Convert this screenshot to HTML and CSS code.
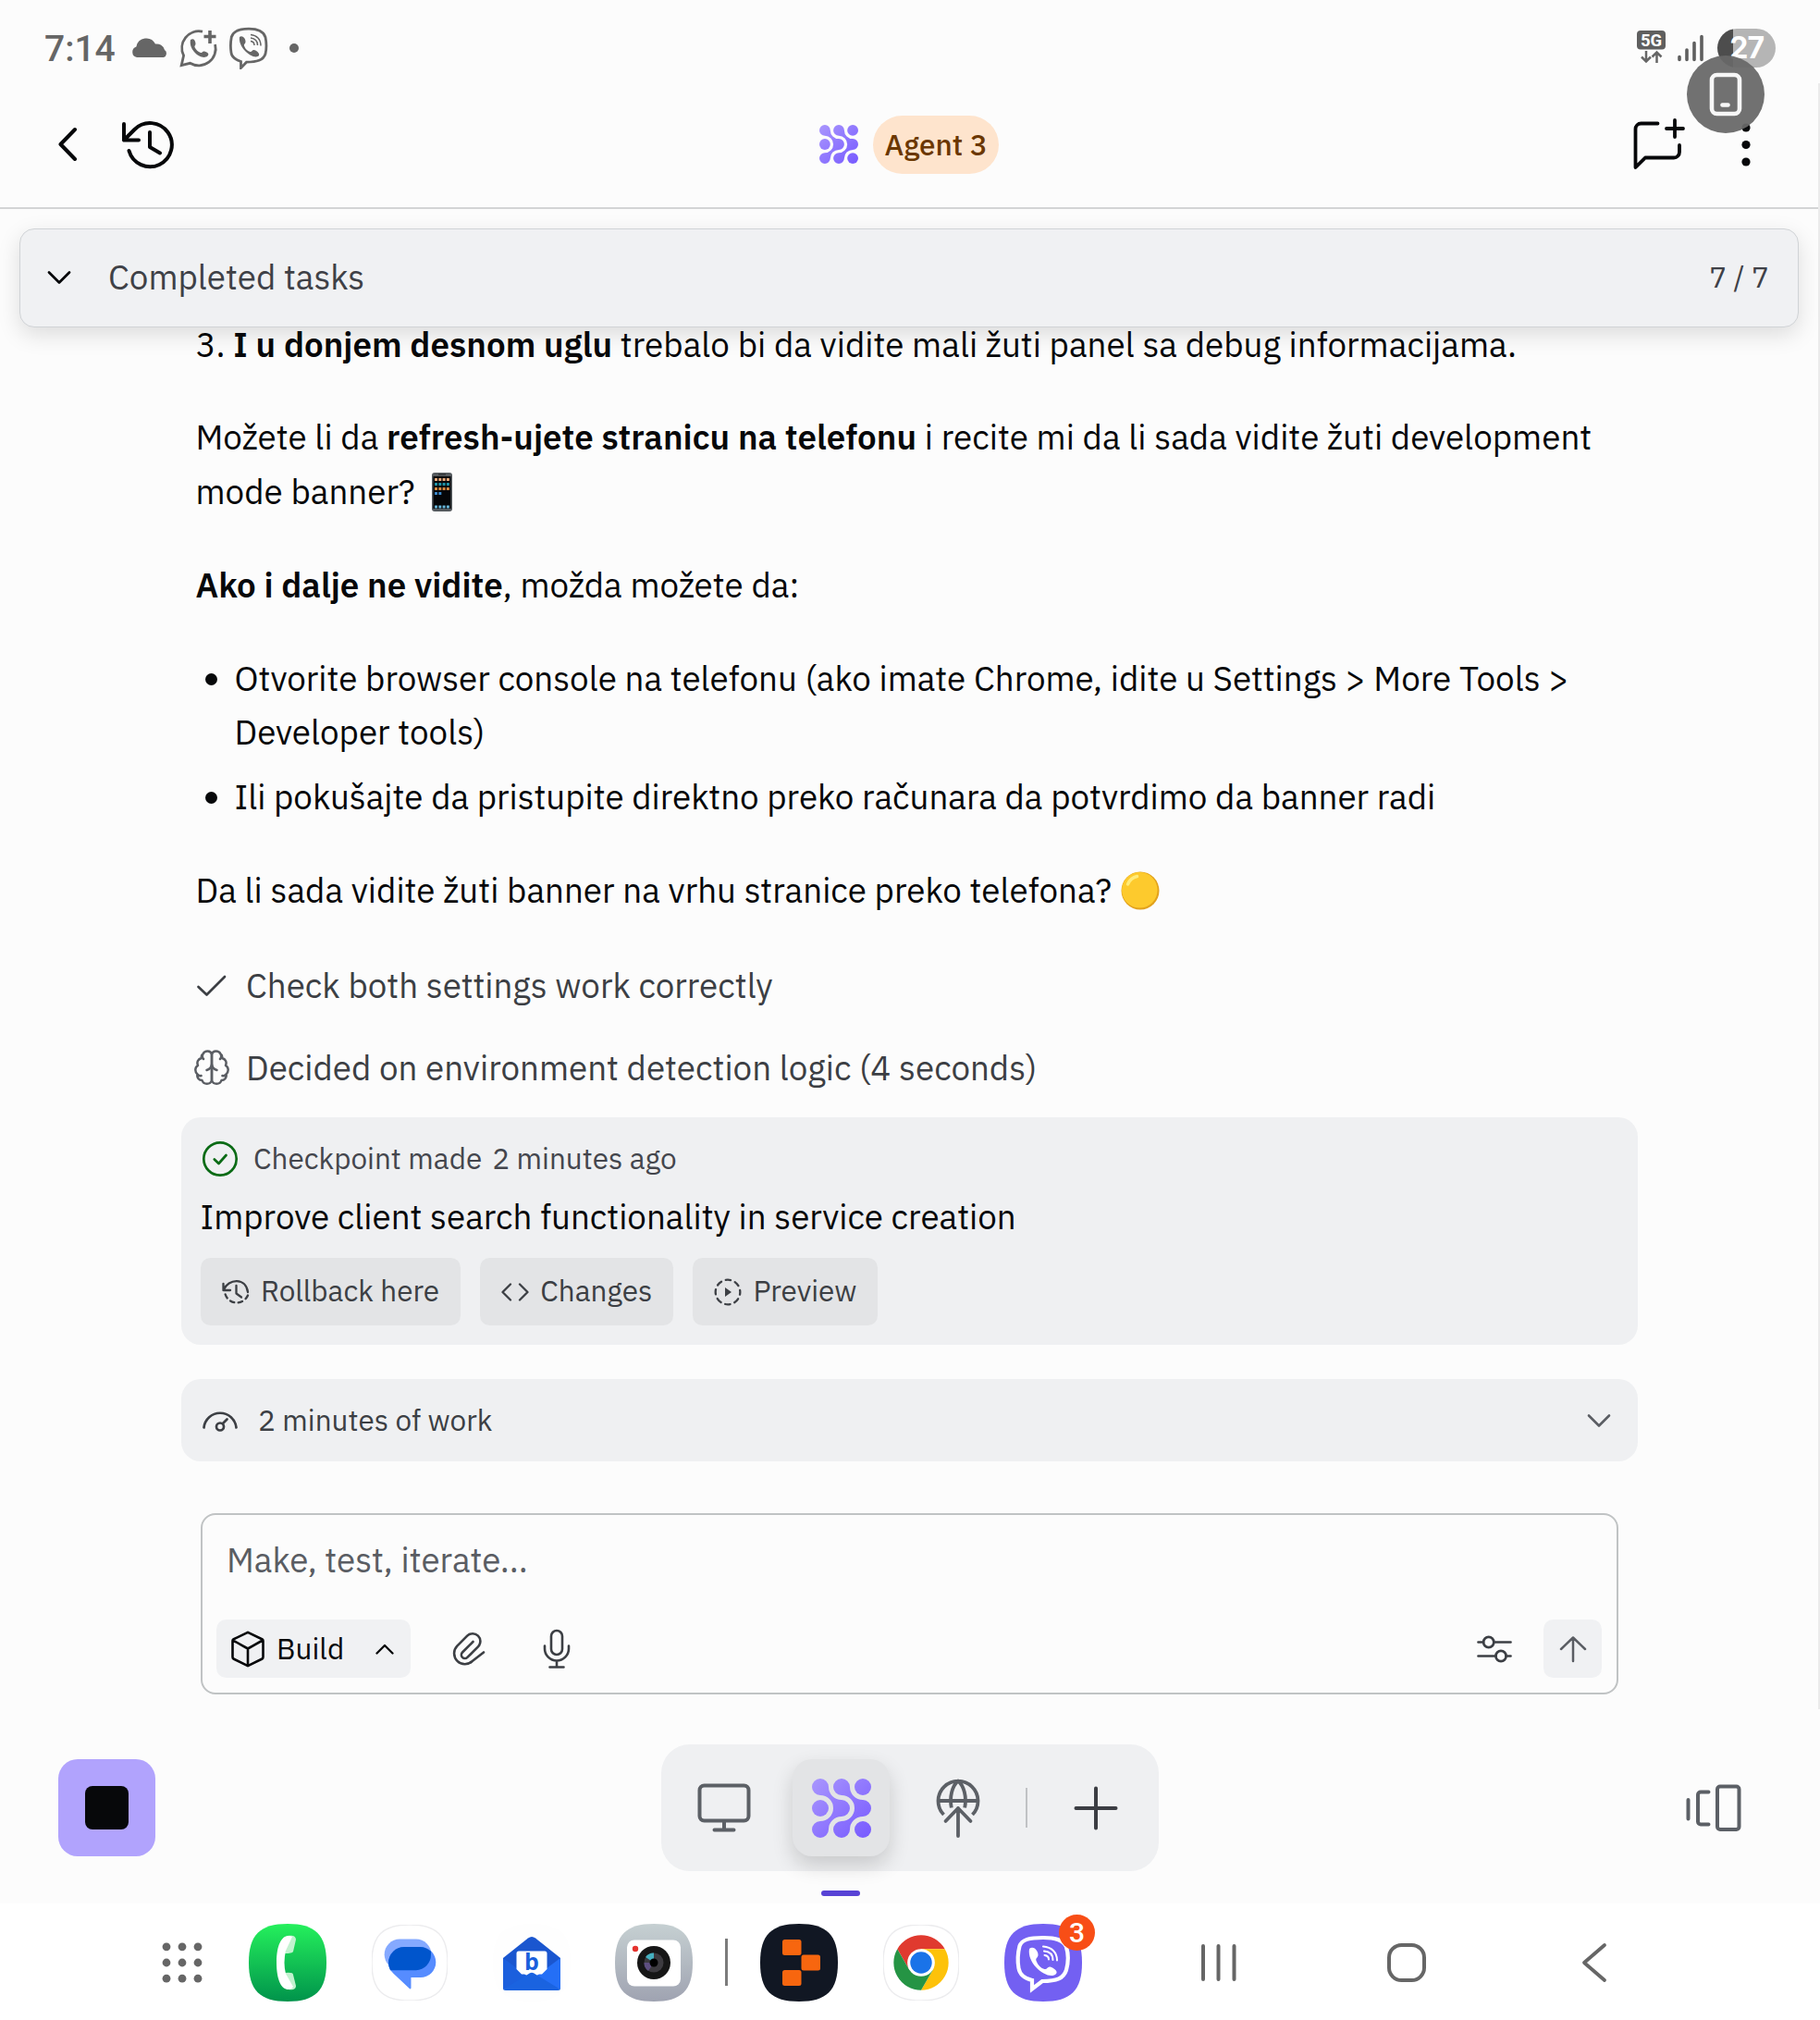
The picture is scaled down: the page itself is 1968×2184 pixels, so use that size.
FILE: index.html
```html
<!DOCTYPE html>
<html lang="sr">
<head>
<meta charset="utf-8">
<title>Agent 3</title>
<link rel="stylesheet" href="styles.css">
</head>
<body>
<svg class="defs" width="0" height="0" aria-hidden="true">
  <defs>
    <linearGradient id="agentFill" gradientUnits="userSpaceOnUse" x1="0" y1="0" x2="64" y2="64"><stop offset="0" stop-color="#a996fd"/><stop offset="1" stop-color="#775aff"/></linearGradient>
    <linearGradient id="phoneFill" x1="0" y1="0" x2="0" y2="1"><stop offset="0" stop-color="#25f05c"/><stop offset="1" stop-color="#00934b"/></linearGradient>
    <linearGradient id="cameraFill" x1="0" y1="0" x2="0" y2="1"><stop offset="0" stop-color="#c6d0d2"/><stop offset="1" stop-color="#9fa3b1"/></linearGradient>
    <symbol id="agent" viewBox="0 0 64 64">
      <g fill="url(#agentFill)">
        <path d="M9 0A9 9 0 0 1 18 9A14 14 0 0 0 32 23A9 9 0 0 1 32 41A14 14 0 0 0 18 55A9 9 0 1 1 9 46A14 14 0 0 0 9 18A9 9 0 0 1 9 0Z"/>
        <path d="M32 0A9 9 0 0 1 41 9A14 14 0 0 0 55 23A9 9 0 0 1 55 41A14 14 0 0 0 41 55A9 9 0 1 1 32 46A14 14 0 0 0 32 18A9 9 0 0 1 32 0Z"/>
        <circle cx="9" cy="32" r="9"/><circle cx="55" cy="9" r="9"/><circle cx="55" cy="55" r="9"/>
      </g>
    </symbol>
    <symbol id="squircle" viewBox="0 0 84 84"><path d="M42 0C72 0 84 12 84 42S72 84 42 84 0 72 0 42 12 0 42 0Z"/></symbol>
  </defs>
</svg>

<div class="status">
  <span class="clock">7:14</span>
  <svg class="st-cloud" width="40" height="22" viewBox="0 0 40 22"><path fill="#666" d="M6 22a6 6 0 0 1-.6-11.6A11 11 0 0 1 26 7.500A9 9 0 0 1 36 14a4.500 4.500 0 0 1-1 8Z"/></svg>
  <svg class="st-whatsapp" width="42" height="42" viewBox="0 0 42 42" fill="none" stroke="#666"><path stroke-width="2.800" d="M25 3.100A18.300 18.300 0 0 0 4.600 29L2.200 39.600 11.500 37.300A18.300 18.300 0 0 0 38.600 17"/><path stroke-width="3.600" d="M33 2v14M26.500 8.500h13"/><path fill="#666" stroke="none" d="M12 12c3-2 5 0 5.500 4 .2 2-1.500 2.500-1 4 1.500 3 3.500 5 6.500 6 1.500.5 2-2 4-1.500 4 1 5.500 3 3.500 5-6 5.500-21-6-18.500-17.500Z"/></svg>
  <svg class="st-viber" width="44" height="46" viewBox="0 0 44 46" fill="none" stroke="#666"><path stroke-width="2.800" d="M22 2.200c11 0 16 3 18 9 1.400 7 1.400 12 0 18-2.400 7-9 9-20.500 9l-6 6.300V37.500C6 35 3.500 32 3 28c-1-6-1-10 .3-17C5 5 11 2.200 22 2.200Z"/><path fill="#666" stroke="none" d="M12 11c3-2.500 7 2 6.500 5.500-.3 2-2 2-1.500 4 1.500 4 4 6 6.500 6.500 2 .3 2-2 4-2 3 .5 6.500 3.500 5.500 6C28 37 10 23 12 11Z"/><path stroke-width="1.500" d="M24 8.500c6.500.5 11 5 11 12M24 12c4.500.5 7.500 3.500 7.500 8M24 15.500c2.500.3 4 2 4 4.500"/></svg>
  <span class="st-dot"></span>
  <svg class="st-5g" width="32" height="36" viewBox="0 0 32 36"><rect x="0" width="31" height="20.500" rx="4" fill="#5f5f5f"/><text x="15.500" y="17" text-anchor="middle" class="fiveg">5G</text><path fill="none" stroke="#666" stroke-width="2.500" d="M10 22v11M5 28.500l5 5 5-5M21.500 35V24M16.500 28.500l5-5 5 5"/></svg>
  <svg class="st-signal" width="28" height="30" viewBox="0 0 28 30" stroke="#5f5f5f" stroke-width="3.600" stroke-linecap="round"><path d="M2 24.500v3M10 17v10.500M18 9.500v18M26 2.500v25"/></svg>
  <div class="battery"><span class="battery-text">27</span></div>
</div>

<div class="app">
  <header class="header">
    <svg class="h-back" width="21" height="38" viewBox="0 0 21 38" fill="none" stroke="#07080a" stroke-width="4" stroke-linecap="round" stroke-linejoin="round"><path d="M18 3 2.500 19 18 35"/></svg>
    <svg class="h-history" width="58" height="54" viewBox="0 0 58 54" fill="none" stroke="#07080a" stroke-width="4" stroke-linecap="round" stroke-linejoin="round"><path d="M8.500 34A23.600 23.600 0 1 0 14.500 11L3 22.500M3 5v17.500H19M31 14v16l11 6.500"/></svg>
    <div class="title">
      <svg width="42" height="42"><use href="#agent"/></svg>
      <span class="agent-pill">Agent 3</span>
    </div>
    <svg class="h-chat" width="56" height="56" viewBox="0 0 56 56" fill="none" stroke="#07080a" stroke-width="3.800" stroke-linecap="round" stroke-linejoin="round"><path d="M26.500 6.500H8.500a6 6 0 0 0-6 6V54l10.500-10.500H44a6 6 0 0 0 6-6V30M45 3v18M36 12h18"/></svg>
    <svg class="h-more" width="10" height="48" viewBox="0 0 10 48" fill="#07080a"><circle cx="5" cy="6" r="4.600"/><circle cx="5" cy="24.500" r="4.600"/><circle cx="5" cy="43" r="4.600"/></svg>
    <div class="float-btn">
      <svg width="36" height="48" viewBox="0 0 36 48" fill="none" stroke="#f7f7f7" stroke-width="4.600" stroke-linecap="round"><rect x="3" y="3" width="30" height="42" rx="5.500"/><path d="M14.500 35.500h6"/></svg>
    </div>
  </header>

  <main class="chat">
    <section class="tasks">
      <svg width="26" height="16" viewBox="0 0 26 16" fill="none" stroke="#07080a" stroke-width="2.800" stroke-linecap="round" stroke-linejoin="round"><path d="M2 2.500 13 13.500 24 2.500"/></svg>
      <span class="tasks-name">Completed tasks</span>
      <span class="tasks-count">7 / 7</span>
    </section>

    <article class="message">
      <p>3. <b>I u donjem desnom uglu</b> trebalo bi da vidite mali žuti panel sa debug informacijama.</p>
      <p>Možete li da <b>refresh-ujete stranicu na telefonu</b> i recite mi da li sada vidite žuti development<br>mode banner? <svg class="emoji-phone" width="22" height="42" viewBox="0 0 22 42"><rect width="22" height="42" rx="3" fill="#555a5e"/><rect x="1.500" y="4" width="19" height="35" fill="#050608"/><path d="M7 2h8" stroke="#222"/><g stroke-width="3" stroke-dasharray="3 1.300"><path stroke="#e8a87a" d="M3 7.500h16"/><path stroke="#1f94a8" d="M3 12.500h16"/><path stroke="#d98a3f" d="M3 17.500h16"/><path stroke="#3a86c8" d="M3 22.500h7.500"/><path stroke="#68b6d8" d="M3 37h16"/></g></svg></p>
      <p><b>Ako i dalje ne vidite</b>, možda možete da:</p>
      <ul>
        <li>Otvorite browser console na telefonu (ako imate Chrome, idite u Settings &gt; More Tools &gt;<br>Developer tools)</li>
        <li>Ili pokušajte da pristupite direktno preko računara da potvrdimo da banner radi</li>
      </ul>
      <p>Da li sada vidite žuti banner na vrhu stranice preko telefona? <svg class="emoji-circle" width="42" height="42" viewBox="0 0 42 42"><circle cx="21" cy="21" r="20.500" fill="#e2a21c"/><circle cx="20.300" cy="20.300" r="19.300" fill="#fdca2d"/><path d="M7.500 14q3-7 10-8.500" fill="none" stroke="#ffeb7a" stroke-width="3.500" stroke-linecap="round"/></svg></p>
    </article>

    <div class="steps">
      <div class="step"><svg width="38" height="38" viewBox="0 0 38 38" fill="none" stroke="#3c3f44" stroke-width="2.700" stroke-linecap="round" stroke-linejoin="round"><path d="M4.500 20 13.500 28.500 33 9"/></svg><span>Check both settings work correctly</span></div>
      <div class="step"><svg width="38" height="38" viewBox="0 0 38 38" fill="none" stroke="#5a5d63" stroke-width="2.500" stroke-linecap="round" stroke-linejoin="round"><path id="lobe" d="M19 5C18 .5 11.500.5 9.500 4.500 8 5.500 7.500 7 8 9 4 10 2.500 13.500 4 17 .5 19 .5 24 3.500 26.500 2.500 30.500 5.500 33 8.500 33 10 38 17.500 38 19 33ZM9.500 4.500C8.500 6.500 8.800 8.800 10 10M3.500 26.500C4.500 28 6 28.500 7.500 28"/><use href="#lobe" transform="matrix(-1 0 0 1 38 0)"/><path d="M13.500 22C17 21 18.500 19 19 16 19.500 19 21 21 24.500 22"/></svg><span>Decided on environment detection logic (4 seconds)</span></div>
    </div>

    <section class="checkpoint">
      <div class="cp-head">
        <svg width="40" height="40" viewBox="0 0 40 40" fill="none" stroke="#0b6b16" stroke-width="2.700" stroke-linecap="round" stroke-linejoin="round"><circle cx="20" cy="20" r="17.700"/><path d="M13.800 20.500 18.500 25 26.500 16"/></svg>
        <span>Checkpoint made</span><span class="cp-time">2 minutes ago</span>
      </div>
      <div class="cp-title">Improve client search functionality in service creation</div>
      <div class="cp-actions">
        <button class="action"><svg width="30" height="28" viewBox="0 0 30 28" fill="none" stroke="#3c3f44" stroke-width="2.300" stroke-linecap="round" stroke-linejoin="round"><path d="M1.500 5v7H9M1.500 12C7-1 26-2 28 14"/><path stroke-dasharray="4.500 4.500" d="M28 17.500A13 13 0 0 1 3.500 16"/><path d="M15.500 7v8.500l5.500 4"/></svg><span>Rollback here</span></button>
        <button class="action"><svg width="30" height="20" viewBox="0 0 30 20" fill="none" stroke="#3c3f44" stroke-width="2.300" stroke-linecap="round" stroke-linejoin="round"><path d="M10 1.500 1.500 10 10 18.500M20 1.500 28.500 10 20 18.500"/></svg><span>Changes</span></button>
        <button class="action"><svg width="30" height="30" viewBox="0 0 30 30" fill="none" stroke="#3c3f44" stroke-width="2.300" stroke-linecap="round"><circle cx="15" cy="15" r="13.300" stroke-dasharray="5.500 4.945" stroke-dashoffset="2.750"/><path fill="#3c3f44" stroke="none" d="M12 10v10l7-5Z"/></svg><span>Preview</span></button>
      </div>
    </section>

    <section class="work">
      <svg width="40" height="30" viewBox="0 0 40 30" fill="none" stroke="#3c3f44" stroke-width="2.700" stroke-linecap="round"><path d="M2.500 22.500A17.600 17.600 0 0 1 37.500 22.500"/><circle cx="20" cy="21.500" r="4"/><path d="M23 18 27.500 13.500"/></svg>
      <span>2 minutes of work</span>
      <svg class="work-chev" width="26" height="16" viewBox="0 0 26 16" fill="none" stroke="#5a5d63" stroke-width="2.600" stroke-linecap="round" stroke-linejoin="round"><path d="M2 2.500 13 13.500 24 2.500"/></svg>
    </section>

    <section class="composer">
      <div class="placeholder">Make, test, iterate...</div>
      <div class="tools">
        <button class="build">
          <svg width="36" height="40" viewBox="0 0 36 40" fill="none" stroke="#07080a" stroke-width="2.600" stroke-linejoin="round"><path d="M18 1.800 33.800 9.500Q34.500 10 34.500 11V28.500Q34.500 30 33.500 30.500L18 38.200 2.500 30.500Q1.500 30 1.500 28.500V11Q1.500 10 2.200 9.500ZM2 10.500 18 19.500 34 10.500M18 19.500V38"/></svg>
          <span>Build</span>
          <svg class="build-chev" width="20" height="12" viewBox="0 0 20 12" fill="none" stroke="#07080a" stroke-width="2.300" stroke-linecap="round" stroke-linejoin="round"><path d="M1.500 10.500 10 2 18.500 10.500"/></svg>
        </button>
        <svg class="t-clip" width="36" height="38" viewBox="0 0 36 38" fill="none" stroke="#3c3f44" stroke-width="2.600" stroke-linecap="round" stroke-linejoin="round"><path d="M22.500 11 11 22.500a3.800 3.800 0 0 0 5.400 5.400L28 16.400A8.300 8.300 0 0 0 16.200 4.700L5.300 15.600A11.600 11.600 0 0 0 21.700 32L34 22.500"/></svg>
        <svg class="t-mic" width="30" height="44" viewBox="0 0 30 44" fill="none" stroke="#3c3f44" stroke-width="2.600" stroke-linecap="round"><rect x="9" y="2" width="12" height="26" rx="6"/><path d="M2 18.500v3a13 13 0 0 0 26 0v-3M15 34.500V41M7.500 41.500h15"/></svg>
        <svg class="t-sliders" width="38" height="30" viewBox="0 0 38 30" fill="none" stroke="#3c3f44" stroke-width="2.700" stroke-linecap="round"><path d="M1.500 7.500H7M18.500 7.500H36.500M1.500 22.500H20.500M31.500 22.500H36.500"/><circle cx="12.700" cy="7.500" r="5.600"/><circle cx="26" cy="22.500" r="5.600"/></svg>
        <button class="send"><svg width="30" height="30" viewBox="0 0 30 30" fill="none" stroke="#5a5d63" stroke-width="2.500" stroke-linecap="round" stroke-linejoin="round"><path d="M15 28V2.500M2 15 15 2.500 28 15"/></svg></button>
      </div>
    </section>
  </main>
</div>

<div class="dock">
  <button class="stop"><span></span></button>
  <div class="tabs">
    <svg class="tab-monitor" width="58" height="54" viewBox="0 0 58 54" fill="none" stroke="#5c6066" stroke-width="4" stroke-linecap="round"><rect x="2.500" y="2.500" width="53" height="38" rx="5"/><path d="M29 41v9.500M18.500 50.500h21"/></svg>
    <div class="tab-active"><svg width="64" height="64"><use href="#agent"/></svg></div>
    <svg class="tab-globe" width="48" height="64" viewBox="0 0 48 64" fill="none" stroke="#5c6066" stroke-width="3.800" stroke-linecap="round" stroke-linejoin="round"><path stroke-linecap="butt" d="M8.500 39A21.500 21.500 0 1 1 39.500 39M2.500 24h43M16.800 31.500C14.500 20 17.500 8 24 2.500 30.500 8 33.500 20 31.200 31.500"/><path d="M24 62V32M10.500 46 24 32 37.500 46"/></svg>
    <span class="tab-sep"></span>
    <svg class="tab-plus" width="48" height="48" viewBox="0 0 48 48" stroke="#3b3d43" stroke-width="4" stroke-linecap="round"><path d="M24 2.500v43M2.500 24h43"/></svg>
    <span class="indicator"></span>
  </div>
  <svg class="panes" width="60" height="52" viewBox="0 0 60 52" fill="none" stroke="#5c6066" stroke-width="4" stroke-linecap="round"><path d="M2.500 17v20.500M24.500 8.500H16a3 3 0 0 0-3 3v29a3 3 0 0 0 3 3h8.500"/><rect x="34" y="2.500" width="23.500" height="46.500" rx="3"/></svg>
</div>

<nav class="navbar">
  <svg class="n-grid" width="44" height="44" viewBox="0 0 44 44" fill="#666"><g id="dotrow"><circle cx="5" cy="4.800" r="4.400"/><circle cx="22" cy="4.800" r="4.400"/><circle cx="39" cy="4.800" r="4.400"/></g><use href="#dotrow" y="17.200"/><use href="#dotrow" y="34.400"/></svg>
  <svg width="84" height="84" viewBox="0 0 84 84"><use href="#squircle" fill="url(#phoneFill)"/><path fill="#c2f2cf" d="M42 13c5-1 9 0 9 4L48 30q-1 2-9 2ZM39 53q9-1 9 2l3 12c0 4-4 5-8 4Z"/><path fill="#fff" d="M44 13C36 12 30 22 30 42s6 30 14 29q3-1 4-3L40 54Q37 42 40 29L47 14Z"/></svg>
  <svg width="84" height="84" viewBox="-1 -1 86 86"><use href="#squircle" width="84" height="84" fill="#fff" stroke="#ececee" stroke-width="1.500"/><rect x="14" y="16" width="52" height="34" rx="17" fill="#85a9ff"/><path fill="#568cff" d="M36 24.500H54a17 17 0 0 1 0 34H43.500V70q0 2-2 .5L24 54Q18 48 18.500 42A17.500 17.500 0 0 1 36 24.500Z"/><path fill="#0055cc" d="M36 24.500H53.500Q60 24.500 65.500 29.500V33A17 17 0 0 1 49 50.500H20.500Q18.500 46 18.500 42A17.500 17.500 0 0 1 36 24.500Z"/></svg>
  <svg width="84" height="84" viewBox="0 0 84 84"><use href="#squircle" fill="#fefefe"/><path fill="#1a56cf" d="M11 37 38 15.500Q42 12.500 46 15.500L73 37V50H11Z"/><path fill="#1b5fdd" d="M11 37 42 60 11 71Z"/><path fill="#246ff6" d="M73 37 42 60 73 71Z"/><path fill="#1a63e0" d="M11 71 38 54.500Q42 51 46 54.500L73 71Q72 72 70 72H14Q12 72 11 71Z"/><path fill="#fff" d="M28 29.500H56Q58.500 29.500 58.500 32V49L53 54.500H49L42 51 35 54.500H31L25.500 49V32Q25.500 29.500 28 29.500Z"/><text x="42" y="50" text-anchor="middle" class="mail-b">b</text></svg>
  <svg width="84" height="84" viewBox="0 0 84 84"><use href="#squircle" fill="url(#cameraFill)"/><rect x="13" y="17.500" width="58" height="50" rx="8" fill="#fff"/><circle cx="22" cy="27" r="3.200" fill="#e5322e"/><circle cx="42" cy="42" r="18" fill="#161616"/><circle cx="42" cy="42" r="10.500" fill="#3d3b40"/><path fill="#5e4f80" d="M42 42H31.500A10.500 10.500 0 0 0 36 51Z"/><path fill="#45b0c0" d="M42 42 33 36A10.500 10.500 0 0 1 42 31.500Z"/><circle cx="42" cy="42" r="4.500" fill="#000"/></svg>
  <span class="n-sep"></span>
  <svg width="84" height="84" viewBox="0 0 84 84"><use href="#squircle" fill="#111723"/><g fill="#f7660f"><rect x="24" y="17" width="20.500" height="17" rx="2.500"/><rect x="44.500" y="33.500" width="20.500" height="17" rx="2.500"/><rect x="24" y="50" width="20.500" height="17" rx="2.500"/></g></svg>
  <svg width="84" height="84" viewBox="-1 -1 86 86"><use href="#squircle" width="84" height="84" fill="#fff" stroke="#ececee" stroke-width="1.500"/><path fill="#e03a2f" d="M15.700 26.800A30.400 30.400 0 0 1 68.300 26.800H42L28.800 49.600Z"/><path fill="#fdc20a" d="M68.300 26.800A30.400 30.400 0 0 1 42 72.400L55.200 49.600 42 26.800Z"/><path fill="#259444" d="M42 72.400A30.400 30.400 0 0 1 15.700 26.800L28.800 49.600 55.200 49.600Z"/><circle cx="42" cy="42" r="15.200" fill="#fff"/><circle cx="42" cy="42" r="12" fill="#1a73e8"/></svg>
  <div class="n-viber">
    <svg width="84" height="84" viewBox="0 0 84 84"><use href="#squircle" fill="#7360f2"/><path fill="none" stroke="#fff" stroke-width="4.200" d="M42 15c14 0 22 2.500 25 10 2.500 8 2.500 16 0 25-3 9-10 12-26 12L30 70.500V61C20 58.500 16.500 54 15.500 48c-1.500-8-1-16 1-24C19 17 27 15 42 15Z"/><path fill="#fff" d="M27 27c5-4 10 3 9.500 7-.4 3-3 3-2 6 2 5 5 8 9 9 3 .6 3-3 6-2.500 4 1 9 5 6.500 7.500C49 62 24 45 27 27Z"/><path fill="none" stroke="#fff" stroke-width="2" stroke-linecap="round" d="M42 24.500c9 .5 15 6.500 15 15M43 29.500c6 .5 9.500 4 9.500 9.500M43.500 34c3 .4 4.500 2 4.500 4.500"/></svg>
    <span class="badge">3</span>
  </div>
  <svg class="n-recents" width="40" height="42" viewBox="0 0 40 42" stroke="#666" stroke-width="4" stroke-linecap="round"><path d="M3 3v36M19.500 3v36M36.500 3v36"/></svg>
  <svg class="n-home" width="44" height="44" viewBox="0 0 44 44" fill="none" stroke="#666" stroke-width="4"><rect x="3" y="3" width="38" height="38" rx="13.500"/></svg>
  <svg class="n-back" width="28" height="44" viewBox="0 0 28 44" fill="none" stroke="#666" stroke-width="3.800" stroke-linecap="round" stroke-linejoin="round"><path d="M25 3 3 22 25 41"/></svg>
</nav>
</body>
</html>
```
FILE: styles.css
```css
* { box-sizing: border-box; }
body {
  margin: 0;
  width: 1968px;
  height: 2184px;
  display: flex;
  flex-direction: column;
  overflow: hidden;
  background: #fcfcfc;
  color: #07080a;
  font-family: "IBM Plex Sans", "Noto Sans", sans-serif;
  font-size: 36.750px;
  line-height: 58.8px;
}
svg { display: block; flex: none; }
.defs { position: absolute; }
button { border: 0; margin: 0; padding: 0; font: inherit; color: inherit; background: none; display: flex; align-items: center; }
b { font-weight: 600; }

.status { height: 90px; flex: none; display: flex; align-items: flex-start; padding-left: 48px; }
.clock { width: 94px; margin-top: 24px; font: 500 39px/58px Roboto, sans-serif; color: #666; }
.st-cloud { margin-top: 40px; }
.st-whatsapp { margin: 31px 0 0 12px; }
.st-viber { margin: 29px 0 0 11px; }
.st-dot { width: 10px; height: 10px; margin: 47px 0 0 22px; border-radius: 50%; background: #666; }
.st-5g { margin: 33px 0 0 auto; }
.fiveg { font: 700 18.500px Roboto, sans-serif; fill: #fff; }
.st-signal { margin: 37px 0 0 12px; }
.battery { width: 63px; height: 42px; margin: 31px 48px 0 15px; border-radius: 21px; background: linear-gradient(90deg, #4d4d4d 17px, #b5b5b5 17px); color: #fff; text-align: right; }
.battery-text { display: block; margin: 0 13px 0 0; font: 700 32px/42px Inter, sans-serif; letter-spacing: -1px; }

.app { width: 1968px; height: 1758px; flex: none; border-right: 2px solid #ebebeb; }
.header { position: relative; height: 136px; display: flex; align-items: center; padding: 0 0 2px 63px; border-bottom: 2px solid #d3d4d5; }
.h-history { margin-left: 47px; }
.title { margin: 0 auto 0 697px; display: flex; align-items: center; gap: 16px; }
.agent-pill { width: 136px; height: 63px; border-radius: 32px; background: #fee4cd; color: #6b3700; font-size: 31.500px; font-weight: 500; line-height: 64px; text-align: center; }
.h-chat { margin-right: 61px; margin-top: -2px; }
.h-more { margin-right: 73px; }
.float-btn { position: absolute; left: 1824px; top: -30px; width: 84px; height: 84px; border-radius: 50%; background: rgba(104, 104, 104, .94); display: flex; align-items: center; justify-content: center; }

.tasks { position: relative; z-index: 1; height: 107px; margin: 21px 21px -11.500px; display: flex; align-items: center; padding: 0 31px 2px 29px; border: 1px solid #d0d3d6; border-radius: 16px; background: #f0f1f3; box-shadow: 0 8px 24px rgba(0, 0, 0, .13); color: #3f4147; }
.tasks-name { margin-left: 40px; }
.tasks-count { margin: 1px 0 0 auto; font-size: 31.500px; }

.message { padding: 0 0 0 211.500px; white-space: nowrap; }
.message p { margin: 0 0 42px; letter-spacing: .025px; }
.message ul { margin: 0 0 42px; padding: 0 0 0 42px; display: flex; flex-direction: column; gap: 10.500px; }
.emoji-phone { display: inline-block; vertical-align: -8px; margin-left: 10px; }
.emoji-circle { display: inline-block; vertical-align: -8px; margin-left: 1px; }

.steps { margin: 45px 0 25px 210px; display: flex; flex-direction: column; gap: 29.500px; color: #3c3f44; }
.step { display: flex; align-items: center; gap: 18px; white-space: nowrap; }

.checkpoint { margin: 0 195px 37px 196px; height: 246px; padding: 21px; border-radius: 21px; background: #eff0f2; }
.cp-head { height: 47px; display: flex; align-items: center; color: #44464d; font-size: 31.500px; }
.cp-head svg { margin: 0 16px 0 1px; }
.cp-time { margin-left: 11px; }
.cp-title { margin: 10px 0 15px -.5px; }
.cp-actions { display: flex; gap: 21px; }
.action { height: 73px; padding: 0 23px; gap: 12px; border-radius: 10.500px; background: #e3e4e6; color: #3c3f44; font-size: 31.500px; }

.work { margin: 0 195px 56px 196px; height: 89px; display: flex; align-items: center; padding: 0 29px 0 22px; border-radius: 21px; background: #eff0f2; color: #3c3f44; font-size: 31.500px; }
.work span { margin-left: 21px; }
.work-chev { margin-left: auto; }

.composer { margin: 0 216px 0 217px; height: 196px; border: 2px solid #c0c3c4; border-radius: 16px; padding: 19px 16px 0 15px; }
.placeholder { padding-left: 11px; height: 94px; color: #5a5d63; }
.tools { height: 63px; display: flex; align-items: center; }
.build { width: 210px; height: 63px; padding-left: 16px; border-radius: 10.500px; background: #f0f1f3; font-size: 31.500px; }
.build span { margin-left: 13px; }
.build-chev { margin: 0 18px 0 auto; }
.t-clip { margin-left: 45px; }
.t-mic { margin-left: 62px; }
.t-sliders { margin: 0 34px 0 auto; }
.send { width: 63px; height: 63px; border-radius: 10.500px; background: #f0f1f3; justify-content: center; }

.dock { height: 210px; flex: none; display: flex; align-items: flex-start; padding: 38px 85px 0 63px; }
.stop { width: 105px; height: 105px; margin-top: 16px; border-radius: 21px; background: #b1a3fd; justify-content: center; }
.stop span { width: 47px; height: 47px; border-radius: 8px; background: #07080a; }
.tabs { position: relative; width: 538px; height: 137px; margin-left: 547px; display: flex; align-items: center; padding-left: 39px; border-radius: 31px; background: #eff0f2; }
.tab-active { width: 105px; height: 105px; margin-left: 45px; display: flex; align-items: center; justify-content: center; border-radius: 21px; background: #e3e4e6; box-shadow: 0 10px 22px rgba(0, 0, 0, .16); }
.tab-globe { margin-left: 50px; }
.tab-sep { width: 2px; height: 43px; margin-left: 49px; background: #c0c2c5; }
.tab-plus { margin-left: 50px; }
.indicator { position: absolute; left: 173px; bottom: -27px; width: 42px; height: 6px; border-radius: 3px; background: #5843d5; }
.panes { margin: 43px 0 0 auto; }

.navbar { height: 126px; flex: none; display: flex; align-items: center; gap: 48px; padding: 1px 0 0 175px; background: #fff; }
.n-grid { margin-right: 2px; }
.n-sep { width: 3px; height: 51px; margin: 0 -13px 0 -13px; background: #7c7c7c; }
.n-viber { position: relative; }
.badge { position: absolute; left: 59px; top: -10px; width: 39px; height: 39px; border-radius: 50%; background: #f84e16; color: #fff; font: 500 30px/39px Roboto, sans-serif; text-align: center; }
.n-recents { margin-left: 80px; }
.n-home { margin-left: 113px; }
.n-back { margin-left: 119px; }
.mail-b { font: 700 25px "Open Sans", sans-serif; fill: #1a5fdc; }
```
